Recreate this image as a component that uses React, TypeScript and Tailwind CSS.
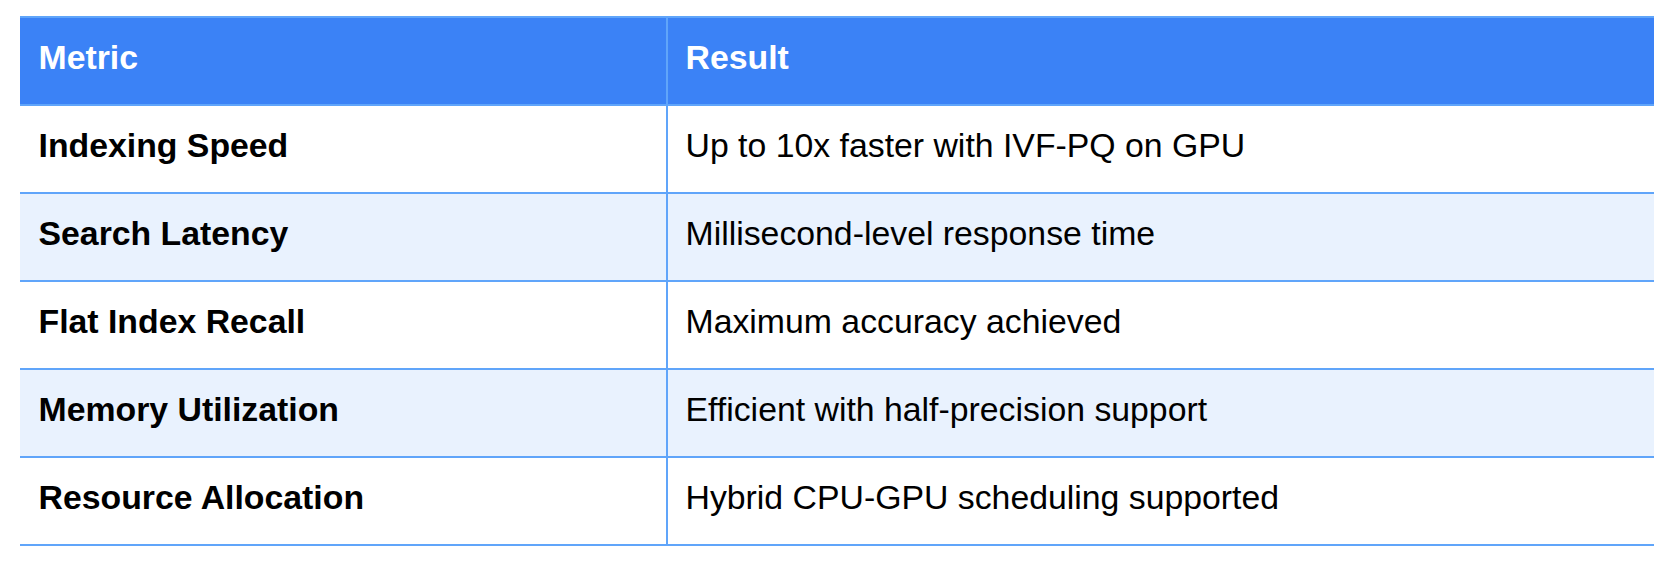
import React from "react";

interface Row {
  metric: string;
  result: string;
}

const rows: Row[] = [
  { metric: "Indexing Speed", result: "Up to 10x faster with IVF-PQ on GPU" },
  { metric: "Search Latency", result: "Millisecond-level response time" },
  { metric: "Flat Index Recall", result: "Maximum accuracy achieved" },
  { metric: "Memory Utilization", result: "Efficient with half-precision support" },
  { metric: "Resource Allocation", result: "Hybrid CPU-GPU scheduling supported" },
];

export default function App() {
  return (
    <div
      className="min-h-[568px] w-[1674px] bg-white pt-[16px] pl-[20px]"
      style={{ fontFamily: '"Liberation Sans", Arial, sans-serif' }}
    >
      <div className="w-[1634px]">
        {/* Header */}
        <div className="flex h-[90px] border-t-2 border-b-2 border-[#60a5fa] bg-[#3b82f6] text-white">
          <div className="w-[646px] pl-[18.5px] pt-[23px] text-[33.8px] font-bold leading-none">Metric</div>
          <div className="flex-1 border-l-2 border-[#60a5fa] pl-[17.5px] pt-[23px] text-[33.8px] font-bold leading-none">
            Result
          </div>
        </div>

        {/* Body */}
        {rows.map((row, i) => (
          <div
            key={row.metric}
            className={`flex h-[88px] border-b-2 border-[#60a5fa] text-black ${
              i % 2 === 1 ? "bg-[#e9f2fe]" : "bg-white"
            }`}
          >
            <div className="w-[646px] pl-[18.5px] pt-[23px] text-[33.8px] font-bold leading-none">{row.metric}</div>
            <div className="flex-1 border-l-2 border-[#60a5fa] pl-[17.5px] pt-[23px] text-[33.8px] leading-none">
              {row.result}
            </div>
          </div>
        ))}
      </div>
    </div>
  );
}
